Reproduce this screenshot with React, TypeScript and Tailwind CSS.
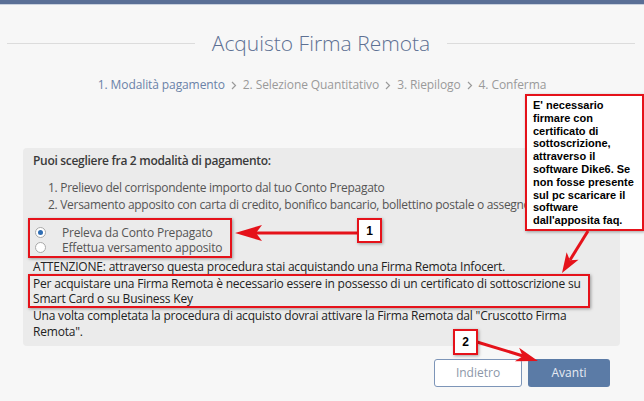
import React from 'react';

const RED = '#e5121a';

const Chevron = () => (
    <svg width="6" height="9" viewBox="0 0 6 9" className="mx-[6px] shrink-0">
        <path d="M1 1 L4.5 4.5 L1 8" fill="none" stroke="#9a9a9a" strokeWidth="1.2" />
    </svg>
);

const Radio = ({ checked }: { checked?: boolean }) => (
    <span className="w-[11px] h-[11px] rounded-full border border-[#a9a9a9] bg-white flex items-center justify-center shrink-0">
        {checked && <span className="w-[5px] h-[5px] rounded-full bg-[#2f6db3]" />}
    </span>
);

const Annotations = () => (
    <svg className="absolute inset-0 pointer-events-none" width="644" height="401" viewBox="0 0 644 401">
        {/* arrow 1 */}
        <line x1="357" y1="233" x2="252" y2="233" stroke={RED} strokeWidth="3" />
        <polygon points="235,233 262,225 256,233 262,241" fill={RED} />
        {/* arrow from callout */}
        <line x1="588" y1="231" x2="570" y2="260" stroke={RED} strokeWidth="3" />
        <polygon points="562,273 578.5,259.7 569.9,260.2 566.6,252.3" fill={RED} />
        {/* arrow 2 */}
        <line x1="477" y1="342" x2="523" y2="356" stroke={RED} strokeWidth="3" />
        <polygon points="538,361 514.9,361.2 522.7,356.2 519.1,347.8" fill={RED} />
    </svg>
);

const App: React.FC = () => {
    return (
        <div className="relative w-[644px] h-[401px] overflow-hidden bg-[#f7f7f7] font-['Open_Sans',sans-serif]">
            {/* top bar */}
            <div className="h-[4px] bg-[#5a6f96]" />
            <div className="h-px bg-[#c9d1de]" />

            {/* title */}
            <div className="flex items-center mt-[23px] h-[30px]">
                <div className="flex-1 h-px bg-[#dcdcdc] ml-[7px]" />
                <h1 className="px-[17px] text-[21px] leading-[30px] font-light text-[#5d7093]">Acquisto Firma Remota</h1>
                <div className="flex-1 h-px bg-[#dcdcdc] mr-[9px]" />
            </div>

            {/* steps */}
            <div className="flex items-center justify-center mt-[18px] h-[18px] text-[12px] tracking-[-0.1px] text-[#9a9a9a]">
                <span className="text-[#6a82a8]">1. Modalità pagamento</span>
                <Chevron />
                <span>2. Selezione Quantitativo</span>
                <Chevron />
                <span>3. Riepilogo</span>
                <Chevron />
                <span>4. Conferma</span>
            </div>

            {/* content box */}
            <div className="mt-[54px] ml-[23px] mr-[24px] rounded-[4px] bg-[#ebebeb] pl-[10px] pr-[6px] pt-[4px] pb-[6px] text-[12px] tracking-[-0.2px] text-[#3f3f3f] whitespace-nowrap">
                <p className="font-semibold tracking-[-0.3px] leading-[17px] text-[#3a3a3a]">Puoi scegliere fra 2 modalità di pagamento:</p>
                <ol className="mt-[10px] ml-[15px] leading-[17px] tracking-[-0.3px] text-[#555]">
                    <li>1. Prelievo del corrispondente importo dal tuo Conto Prepagato</li>
                    <li>2. Versamento apposito con carta di credito, bonifico bancario, bollettino postale o assegno</li>
                </ol>
                <div className="mt-[5px] -ml-[5px] w-[204px] border-2 border-[#e5121a] pl-[5px] pt-[5px] pb-px shadow-[1px_1px_3px_rgba(0,0,0,0.35)] text-[#555]">
                    <label className="flex items-center h-[15px]">
                        <Radio checked />
                        <span className="ml-[16px]">Preleva da Conto Prepagato</span>
                    </label>
                    <label className="flex items-center h-[15px]">
                        <Radio />
                        <span className="ml-[16px]">Effettua versamento apposito</span>
                    </label>
                </div>
                <p className="mt-[2px] leading-[14px] text-[#222]">ATTENZIONE: attraverso questa procedura stai acquistando una Firma Remota Infocert.</p>
                <div className="-ml-[5px] w-[562px] border-2 border-[#e5121a] pl-[3px] leading-[15px] text-[#222] shadow-[1px_1px_3px_rgba(0,0,0,0.35)]">
                    Per acquistare una Firma Remota è necessario essere in possesso di un certificato di sottoscrizione su
                    <br />
                    Smart Card o su Business Key
                </div>
                <p className="leading-[16px] text-[#222]">
                    Una volta completata la procedura di acquisto dovrai attivare la Firma Remota dal "Cruscotto Firma
                    <br />
                    Remota".
                </p>
            </div>

            {/* buttons */}
            <div className="flex justify-end gap-[6px] mt-[13px] pr-[34px]">
                <button className="w-[88px] h-[28px] rounded-[3px] border border-[#7d95b8] bg-white text-[12px] text-[#8c97a8]">Indietro</button>
                <button className="w-[82px] h-[28px] rounded-[3px] bg-[#5b7ba6] text-[12px] text-[#e6ebf3]">Avanti</button>
            </div>

            {/* callout */}
            <div className="absolute left-[525px] top-[94px] w-[119px] h-[137px] border-2 border-[#e5121a] bg-white pl-[6px] pt-[3px] font-['Liberation_Sans',Arial,sans-serif] text-[11px] leading-[12.8px] font-bold text-black shadow-[1px_1px_3px_rgba(0,0,0,0.35)]">
                E' necessario<br />
                firmare con<br />
                certificato di<br />
                sottoscrizione,<br />
                attraverso il<br />
                software Dike6. Se<br />
                non fosse presente<br />
                sul pc scaricare il<br />
                software<br />
                dall'apposita faq.
            </div>

            <Annotations />

            <div className="absolute left-[357px] top-[218px] w-[25px] h-[25px] border-2 border-[#e5121a] bg-white flex items-center justify-center font-['Liberation_Sans',Arial,sans-serif] text-[12px] font-bold text-black shadow-[1px_1px_3px_rgba(0,0,0,0.35)]">1</div>
            <div className="absolute left-[453px] top-[329px] w-[25px] h-[26px] border-2 border-[#e5121a] bg-white flex items-center justify-center font-['Liberation_Sans',Arial,sans-serif] text-[12px] font-bold text-black shadow-[1px_1px_3px_rgba(0,0,0,0.35)]">2</div>
        </div>
    );
};

export default App;
